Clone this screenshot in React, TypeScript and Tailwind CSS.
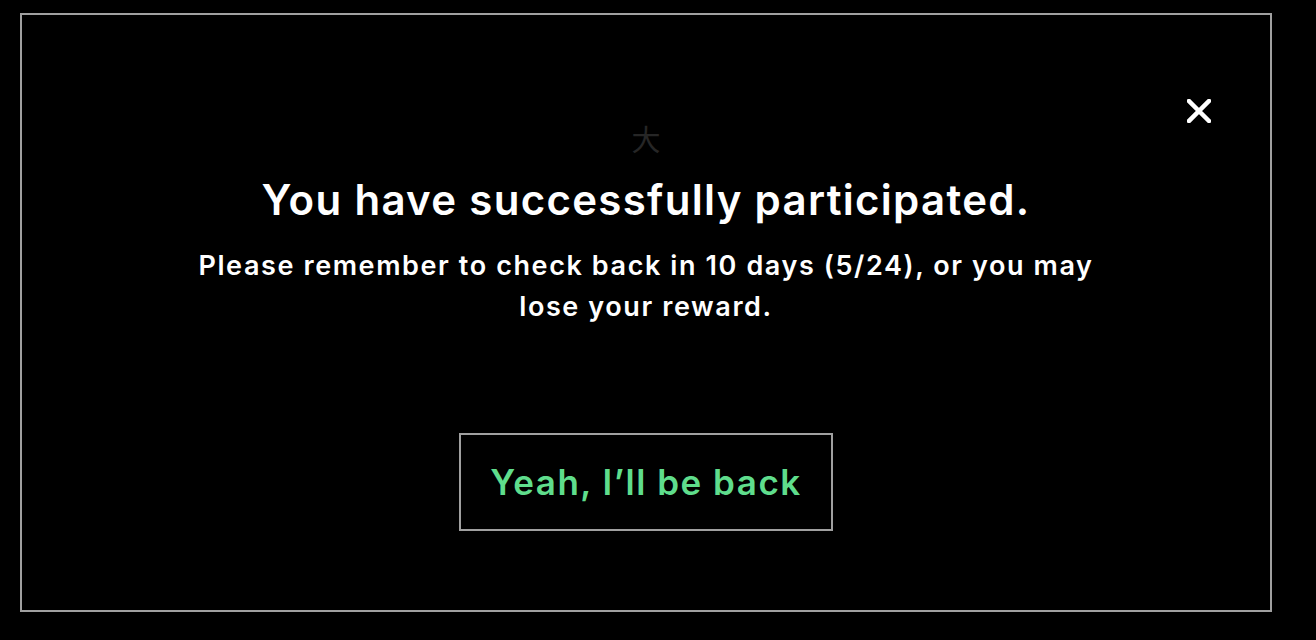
import React from "react";

const App: React.FC = () => {
  return (
    <div
      className="min-h-screen w-full bg-black pt-[13px] pl-[20px] pr-[44px] pb-[28px]"
      style={{ fontFamily: 'Inter, "Liberation Sans", Arial, sans-serif' }}
    >
      <div className="relative flex h-[599px] flex-col items-center border-2 border-[#a0a0a0] bg-black">
        {/* Close */}
        <button className="absolute right-[59px] top-[84px] text-white">
          <svg width="24" height="24" viewBox="0 0 24 24">
            <path
              d="M2 2 L22 22 M22 2 L2 22"
              stroke="currentColor"
              strokeWidth="4.5"
              strokeLinecap="square"
            />
          </svg>
        </button>

        <div
          className="mt-[106px] text-[29px] leading-[34px] text-[#262626]"
          style={{ fontFamily: '"Noto Sans CJK SC", sans-serif' }}
        >
          大
        </div>

        <h1 className="mt-[19px] text-[42px] font-semibold leading-[52px] tracking-[1.3px] text-white">
          You have successfully participated.
        </h1>

        <p className="mt-[19px] w-[960px] text-center text-[27px] font-semibold leading-[41px] tracking-[1.6px] text-white">
          Please remember to check back in 10 days (5/24), or you may lose your
          reward.
        </p>

        <button className="mt-[106px] flex h-[98px] w-[374px] items-center justify-center border-2 border-[#a0a0a0] text-[35px] font-semibold tracking-[1.5px] text-[#5fdd8c]">
          Yeah, I’ll be back
        </button>
      </div>
    </div>
  );
};

export default App;
